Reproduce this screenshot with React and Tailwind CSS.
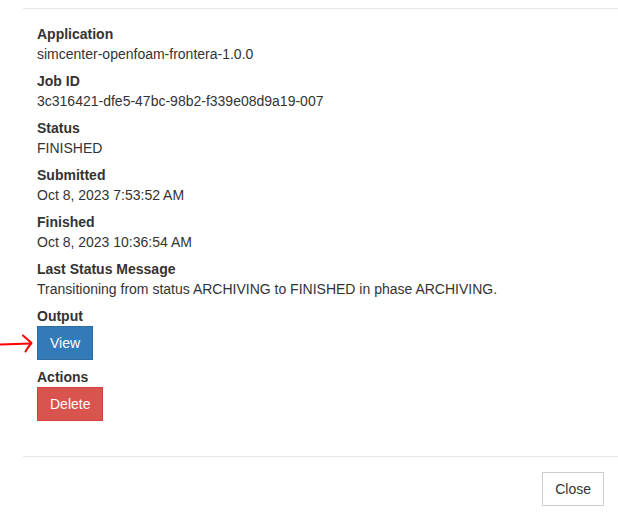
import React from 'react';

const fields = [
  { label: 'Application', value: 'simcenter-openfoam-frontera-1.0.0' },
  { label: 'Job ID', value: '3c316421-dfe5-47bc-98b2-f339e08d9a19-007' },
  { label: 'Status', value: 'FINISHED' },
  { label: 'Submitted', value: 'Oct 8, 2023 7:53:52 AM' },
  { label: 'Finished', value: 'Oct 8, 2023 10:36:54 AM' },
  { label: 'Last Status Message', value: 'Transitioning from status ARCHIVING to FINISHED in phase ARCHIVING.' },
];

const App = () => {
  return (
    <div
      className="relative w-[618px] h-[516px] overflow-hidden bg-white text-[14px] leading-[20px] text-[#333]"
      style={{ fontFamily: '"Liberation Sans", Arial, sans-serif' }}
    >
      <div className="ml-[23px] w-[596px]">
        <div className="h-[9px] border-b border-[#e5e5e5]" />
        <div className="px-[14px] pt-[15px] pb-[15px]">
          <div className="mb-[20px]">
            {fields.map(f => (
              <div key={f.label} className="mb-[7px]">
                <div className="font-bold">{f.label}</div>
                <div>{f.value}</div>
              </div>
            ))}
            <div className="mb-[7px]">
              <div className="font-bold">Output</div>
              <button className="h-[34px] px-[12px] border border-[#2e6da4] bg-[#337ab7] text-white rounded-none">
                View
              </button>
            </div>
            <div>
              <div className="font-bold">Actions</div>
              <button className="h-[34px] px-[12px] border border-[#d43f3a] bg-[#d9534f] text-white rounded-none">
                Delete
              </button>
            </div>
          </div>
        </div>
        <div className="border-t border-[#e5e5e5] pt-[15px] pr-[15px] flex justify-end">
          <button className="h-[34px] px-[12px] border border-[#ccc] bg-white text-[#333] rounded-none">
            Close
          </button>
        </div>
      </div>
      <svg className="absolute left-0 top-[333px]" width="36" height="22" viewBox="0 0 36 22">
        <path d="M0 11.5 L31 10.5" stroke="#f00" strokeWidth="2" fill="none" strokeLinecap="round" />
        <path d="M23 2.5 Q27 6 31.5 10 Q28 14 25.5 18.5" stroke="#f00" strokeWidth="2" fill="none" strokeLinecap="round" strokeLinejoin="round" />
      </svg>
    </div>
  );
};

export default App;
